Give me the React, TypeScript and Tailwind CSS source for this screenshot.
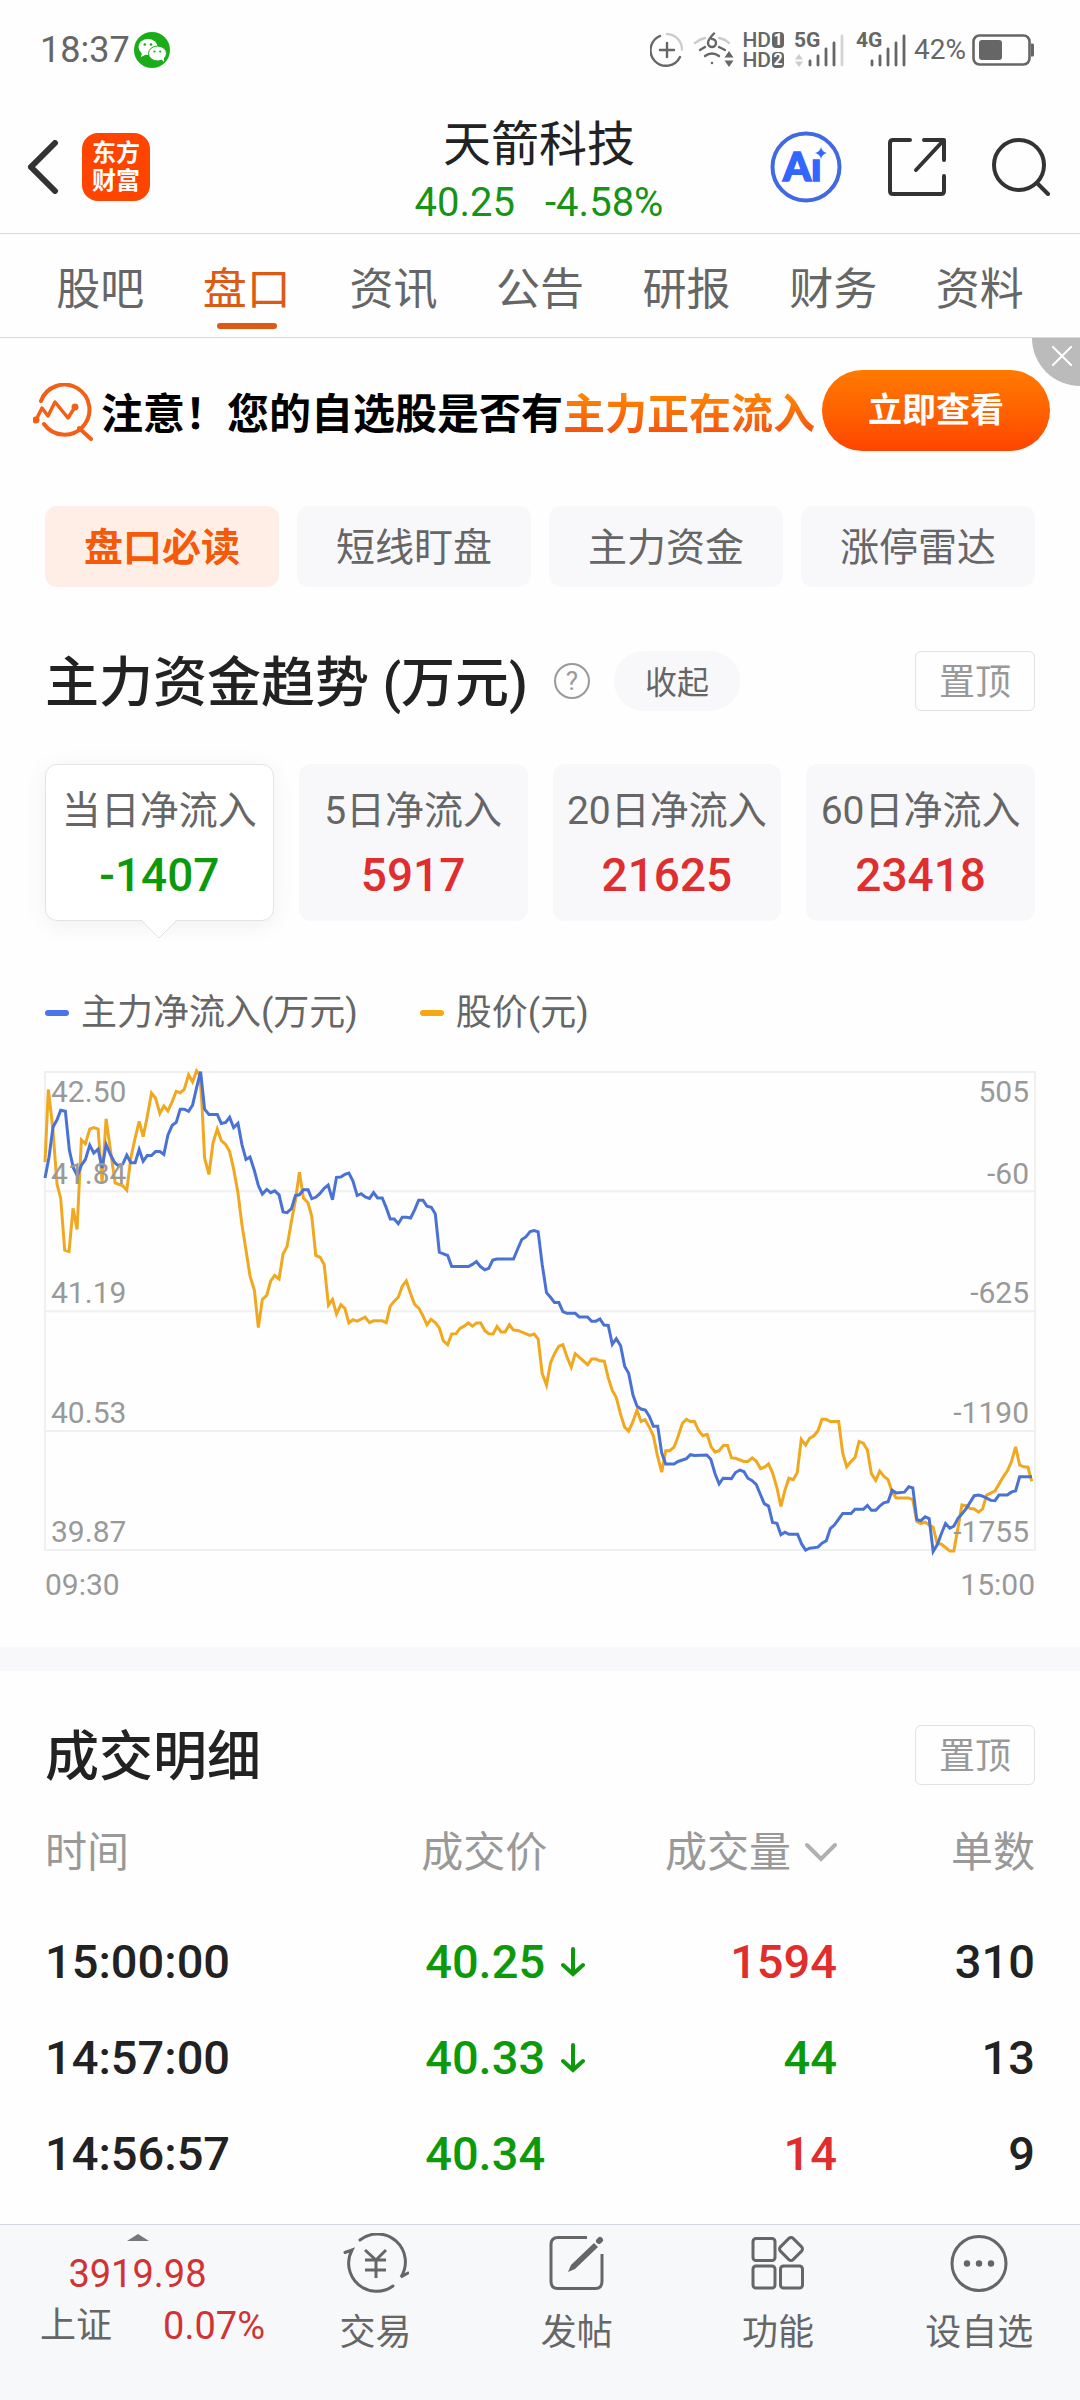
import { ReactNode } from "react";
import clsx from "clsx";

const tabs = ["股吧", "盘口", "资讯", "公告", "研报", "财务", "资料"];

const chips = ["盘口必读", "短线盯盘", "主力资金", "涨停雷达"];

const flows = [
  { label: "当日净流入", value: "-1407" },
  { label: "5日净流入", value: "5917" },
  { label: "20日净流入", value: "21625" },
  { label: "60日净流入", value: "23418" },
];

const priceTicks = ["42.50", "41.84", "41.19", "40.53", "39.87"];
const flowTicks = ["505", "-60", "-625", "-1190", "-1755"];

const trades = [
  { time: "15:00:00", price: "40.25", down: true, volume: "1594", up: true, count: "310" },
  { time: "14:57:00", price: "40.33", down: true, volume: "44", up: false, count: "13" },
  { time: "14:56:57", price: "40.34", down: false, volume: "14", up: true, count: "9" },
];

const flowLine =
  "47,358 59,300 71,215 83,195 94,168 108,171 120,280 132,330 144,352 156,322 168,306 181,266 193,288 206,277 218,330 230,264 243,293 256,315 266,323 280,319 292,294 304,315 317,315 329,278 341,311 353,295 366,295 378,284 391,284 403,292 415,238 428,210 440,202 452,165 464,165 477,171 489,154 501,105 513,60 525,165 538,180 563,180 575,205 588,202 600,188 612,217 625,205 637,265 649,306 661,299 674,337 686,379 698,403 711,390 723,399 735,394 748,405 760,453 772,455 785,444 797,407 809,405 821,391 835,391 846,416 858,412 870,402 883,387 895,378 908,419 920,356 933,355 945,348 957,344 969,366 982,407 994,402 1006,411 1019,415 1031,399 1043,414 1057,414 1069,441 1081,473 1093,473 1105,486 1117,468 1130,468 1142,470 1154,447 1166,420 1179,420 1191,437 1204,440 1216,459 1228,566 1253,575 1265,606 1315,606 1327,600 1339,592 1351,606 1364,615 1376,611 1388,588 1400,585 1450,585 1463,556 1475,530 1487,523 1500,508 1512,505 1524,509 1536,600 1549,679 1561,692 1573,707 1586,707 1598,732 1610,737 1635,737 1647,747 1672,747 1684,759 1697,759 1709,753 1721,770 1734,771 1746,824 1758,808 1771,828 1783,885 1795,905 1808,966 1820,997 1832,1005 1845,1008 1857,1026 1869,1053 1882,1053 1894,1128 1906,1159 1931,1159 1943,1152 1968,1144 1980,1133 1992,1135 2029,1134 2041,1146 2054,1187 2066,1215 2078,1199 2103,1200 2115,1183 2128,1176 2140,1180 2152,1199 2164,1205 2177,1216 2189,1243 2201,1270 2214,1277 2226,1323 2239,1325 2251,1357 2263,1350 2275,1356 2301,1356 2313,1383 2325,1400 2337,1395 2362,1392 2374,1381 2387,1374 2399,1340 2411,1330 2436,1298 2461,1298 2473,1286 2498,1286 2510,1275 2522,1289 2535,1289 2547,1277 2559,1268 2572,1265 2584,1233 2596,1240 2621,1238 2634,1223 2646,1226 2658,1315 2670,1318 2683,1307 2695,1312 2707,1404 2720,1384 2732,1353 2744,1326 2757,1339 2769,1333 2781,1312 2794,1298 2806,1284 2830,1248 2843,1246 2855,1249 2880,1261 2892,1262 2904,1246 2929,1246 2941,1238 2954,1234 2966,1195 3003,1195";

const priceLine =
  "47,313 57,110 70,215 83,375 94,415 106,560 119,564 131,443 143,502 156,251 168,262 181,221 193,217 206,221 218,370 230,192 243,280 257,372 280,380 292,392 304,302 316,250 329,199 341,242 353,187 366,120 378,134 391,177 403,156 415,170 427,146 440,115 452,119 464,110 477,69 489,89 501,58 511,70 517,150 525,302 538,348 550,260 563,221 575,253 588,264 600,284 612,333 625,400 637,490 649,560 661,632 674,672 686,777 698,698 711,687 723,646 735,631 748,641 760,571 772,550 785,480 797,420 809,342 821,414 835,428 846,466 858,575 871,580 883,600 896,714 908,698 920,739 933,713 945,723 957,764 969,755 982,759 1006,748 1019,763 1031,758 1057,758 1069,763 1081,717 1093,703 1105,692 1117,661 1129,646 1142,682 1154,712 1167,723 1179,744 1191,769 1203,754 1216,763 1228,778 1240,814 1253,825 1265,795 1278,794 1290,779 1302,773 1315,764 1327,773 1339,764 1352,764 1364,785 1376,794 1389,795 1401,774 1413,789 1425,789 1438,769 1450,784 1463,785 1499,799 1512,795 1524,809 1536,905 1549,938 1561,876 1573,850 1586,829 1598,825 1610,858 1623,888 1635,850 1672,881 1684,865 1697,865 1709,870 1722,871 1734,918 1746,953 1758,973 1771,1020 1783,1056 1795,1067 1808,1040 1820,1008 1832,1040 1844,1035 1857,1056 1869,1080 1881,1135 1894,1182 1906,1122 1918,1122 1931,1112 1943,1082 1956,1045 1968,1034 1980,1040 1992,1040 2005,1066 2017,1080 2030,1076 2042,1111 2054,1126 2066,1122 2079,1107 2091,1107 2103,1142 2115,1143 2140,1152 2152,1152 2165,1142 2177,1151 2190,1172 2202,1168 2214,1159 2226,1184 2239,1225 2251,1278 2263,1233 2275,1199 2288,1203 2300,1183 2312,1090 2325,1106 2337,1087 2350,1080 2362,1066 2374,1034 2386,1034 2399,1040 2424,1040 2436,1128 2448,1167 2460,1153 2473,1141 2485,1096 2498,1101 2510,1120 2522,1186 2535,1205 2547,1179 2559,1193 2572,1203 2584,1237 2596,1254 2633,1254 2646,1259 2658,1320 2670,1326 2683,1322 2695,1330 2707,1336 2719,1382 2732,1384 2744,1393 2757,1403 2769,1403 2781,1340 2793,1274 2806,1276 2818,1284 2830,1285 2843,1294 2855,1285 2867,1246 2892,1235 2917,1195 2929,1179 2941,1154 2954,1111 2966,1162 2978,1167 2991,1168 3002,1208";

const HdBadge = ({ sim }: { sim: string }) => (
  <div className="flex items-center gap-px">
    <span>HD</span>
    <span className="flex h-4 w-3 items-center justify-center rounded-sm bg-[#666] text-base font-bold text-white">{sim}</span>
  </div>
);

const StatusBar = () => (
  <div className="flex h-[100px] items-center justify-between pl-10 pr-[46px] text-[#666]">
    <div className="flex items-center gap-1">
      <span className="text-4xl">18:37</span>
      <svg className="size-9" viewBox="0 0 36 36">
        <circle cx="18" cy="18" r="18" fill="#1aad19" />
        <ellipse cx="14" cy="15" rx="9.5" ry="8" fill="#fff" />
        <path d="M8 20l-1 5 6-3z" fill="#fff" />
        <ellipse cx="23.5" cy="21.5" rx="9" ry="7.5" fill="#fff" stroke="#1aad19" />
        <path d="M27 27l3 3v-5z" fill="#fff" />
        <g fill="#1aad19">
          <circle cx="10.8" cy="12.5" r="1.3" />
          <circle cx="17" cy="12.5" r="1.3" />
          <circle cx="20.5" cy="19.5" r="1.1" />
          <circle cx="26.2" cy="19.5" r="1.1" />
        </g>
      </svg>
    </div>
    <div className="flex items-center">
      <svg className="h-9 w-[34px]" viewBox="0 0 34 36" fill="none" stroke="#666" strokeWidth="2.4" strokeLinecap="round">
        <path d="M17 2a15.500 15.500 0 0 1 15 15.500" stroke="#ccc" />
        <path d="M10 4a15.500 15.500 0 1 0 20 21" />
        <path d="M17 11v14M10 18h14" />
      </svg>
      <svg className="ml-2 h-9 w-[42px]" viewBox="0 0 42 36" fill="none" stroke="#666" strokeWidth="2.4" strokeLinecap="round">
        <path d="M3 11q5-4 10-5M27 6q6 1 10 5" stroke="#ccc" />
        <path d="M8 18l5-3M27 15l6 3M13 24q7-5 14 0" />
        <path d="M22 1.500q-6 6-6 9.500a4 4 0 1 0 4-4" />
        <circle cx="20" cy="31" r="1.200" fill="#666" stroke="none" />
        <path d="M37 19l4.500 6.500h-9zM37 35l4.500-6.500h-9z" fill="#666" stroke="none" />
      </svg>
      <div className="ml-2 flex flex-col gap-1 text-[21px] leading-4 font-medium">
        <HdBadge sim="1" />
        <HdBadge sim="2" />
      </div>
      <div className="ml-[10px] grid">
        <span className="col-start-1 row-start-1 text-[21px] leading-4 font-bold">5G</span>
        <svg className="col-start-1 row-start-1 h-9 w-[50px]" viewBox="0 0 50 36" stroke="#666" strokeWidth="2.800" strokeLinecap="round">
          <path d="M5 22l4 5.500H1zM5 35l4-5.500H1z" fill="#ccc" stroke="none" />
          <path d="M16 29v4M24 24v9M32 17v16M40 11v22" />
          <path d="M48 4v29" stroke="#d5d5d5" />
        </svg>
      </div>
      <div className="ml-3 grid">
        <span className="col-start-1 row-start-1 text-[21px] leading-4 font-bold">4G</span>
        <svg className="col-start-1 row-start-1 h-9 w-[50px]" viewBox="0 0 50 36" stroke="#666" strokeWidth="2.800" strokeLinecap="round">
          <path d="M16 29v4M24 24v9M32 17v16M40 11v22M48 4v29" />
        </svg>
      </div>
      <span className="ml-2 text-[28px]">42%</span>
      <svg className="ml-[6px] h-8 w-[62px]" viewBox="0 0 62 32" fill="none">
        <rect x="1.500" y="1.500" width="56" height="29" rx="6" stroke="#666" strokeWidth="2.600" />
        <rect x="7" y="6" width="23" height="20" rx="3" fill="#666" />
        <path d="M59 9.500h1.500q1.500 0 1.500 1.500v10q0 1.500-1.500 1.500H59z" fill="#666" />
      </svg>
    </div>
  </div>
);

const Header = () => (
  <header className="grid h-[134px] grid-cols-[1fr_auto_1fr] items-center border-b border-[#d9d9d9] pr-[30px] pl-7">
    <div className="flex items-center gap-[22px]">
      <button aria-label="返回">
        <svg className="h-[54px] w-8" viewBox="0 0 32 54" fill="none" stroke="#333" strokeWidth="6" strokeLinecap="round">
          <path d="M27 3L3 27l24 24" />
        </svg>
      </button>
      <a href="#" className="flex size-[68px] flex-col items-center justify-center rounded-2xl bg-[#ff4400] text-2xl leading-7 font-bold text-white">
        <span>东方</span>
        <span>财富</span>
      </a>
    </div>
    <div className="pt-3 text-center">
      <h1 className="text-5xl leading-[60px] text-[#222]">天箭科技</h1>
      <p className="flex justify-center gap-[30px] text-[40px] leading-[56px] text-[#169416]">
        <span>40.25</span>
        <span>-4.58%</span>
      </p>
    </div>
    <div className="flex items-center justify-end gap-[46px]">
      <button aria-label="AI助手">
        <svg className="size-[72px]" viewBox="0 0 72 72">
          <circle cx="36" cy="36" r="33.500" fill="none" stroke="#4169e1" strokeWidth="4" />
          <text x="13" y="50" fill="#3366ff" stroke="#3366ff" strokeWidth="1.500" className="font-[Lato] text-[40px] font-black">Aı</text>
          <path d="M51 16q1 5 6 6q-5 1-6 6q-1-5-6-6q5-1 6-6z" fill="#3366ff" />
        </svg>
      </button>
      <button aria-label="分享">
        <svg className="size-[58px]" viewBox="0 0 58 58" fill="none" stroke="#333" strokeWidth="4" strokeLinecap="round" strokeLinejoin="round">
          <path d="M22 2H5Q2 2 2 5v48q0 3 3 3h48q3 0 3-3V38M36 2h20v20M55 3L28 32" />
        </svg>
      </button>
      <button aria-label="搜索">
        <svg className="size-[58px]" viewBox="0 0 58 58" fill="none" stroke="#333" strokeWidth="4" strokeLinecap="round">
          <circle cx="27" cy="27" r="25" />
          <path d="M45 45l11 11" />
        </svg>
      </button>
    </div>
  </header>
);

const Tabs = () => (
  <nav className="flex h-[104px] border-b border-[#d9d9d9] px-[27px]">
    {tabs.map((tab) => {
      const active = tab === "盘口";
      return (
        <a key={tab} href="#" className={clsx("flex flex-1 flex-col items-center justify-between pt-[26px] pb-2 text-[44px] leading-[60px]", active ? "text-[#dc5a14]" : "text-[#666]")}>
          {tab}
          {active && <span className="h-[6px] w-[60px] rounded-full bg-[#dc5a14]" />}
        </a>
      );
    })}
  </nav>
);

const Banner = () => (
  <div className="relative flex h-[148px] items-center justify-between pr-[30px] pl-[33px]">
    <div className="flex items-center gap-2">
      <svg className="h-[58px] w-[60px]" viewBox="0 0 60 58" fill="none" stroke="#f26018" strokeWidth="4" strokeLinecap="round" strokeLinejoin="round">
        <path d="M8 18A25 25 0 1 1 11 41M46 45l12 11" />
        <path d="M3 37L9 25l6 8 7-14 13 16 7-11" strokeWidth="3.500" />
        <circle cx="3" cy="37" r="1.500" />
        <circle cx="42" cy="24" r="1.500" />
      </svg>
      <p className="pt-1 text-[42px] font-bold whitespace-nowrap text-black">
        注意！您的自选股是否有
        <span className="bg-linear-to-b from-[#ff8a00] to-[#f04a10] bg-clip-text text-transparent">主力正在流入</span>
      </p>
    </div>
    <button className="mb-1 h-[81px] w-[228px] shrink-0 rounded-full bg-linear-to-b from-[#ff7a00] to-[#ff4400] text-[34px] font-bold text-white">
      立即查看
    </button>
    <button aria-label="关闭" className="absolute top-0 right-0 flex h-12 w-12 items-center justify-center rounded-bl-full bg-[#bbb] pb-3 pl-3">
      <svg className="size-5" viewBox="0 0 20 20" stroke="#fff" strokeWidth="2">
        <path d="M0 0l20 20M20 0L0 20" />
      </svg>
    </button>
  </div>
);

const PinButton = () => (
  <button className="h-[60px] w-[120px] rounded-md border border-[#e2e2e2] pt-1 text-4xl text-[#999]">置顶</button>
);

const FlowCards = () => (
  <div className="mt-[53px] grid grid-cols-4 gap-[25px]">
    {flows.map((flow, i) => (
      <button
        key={flow.label}
        className={clsx(
          "relative h-[157px] rounded-xl text-center",
          i === 0 ? "border border-[#e4e4e4] bg-white shadow-[0_4px_24px_rgba(0,0,0,0.06)]" : "bg-[#f8f8fb]",
        )}
      >
        <span className="block text-[39px] leading-[64px] whitespace-nowrap text-[#666]">{flow.label}</span>
        <span className={clsx("block text-[46px] leading-[64px] font-medium", i === 0 ? "text-[#0c9a0c]" : "text-[#e02d2d]")}>{flow.value}</span>
        {i === 0 && (
          <svg className="absolute top-full left-1/2 h-5 w-9 -translate-x-1/2" viewBox="0 0 36 20">
            <path d="M0-1h36L18 18z" fill="#fff" />
            <path d="M0 0l18 18L36 0" fill="none" stroke="#e4e4e4" />
          </svg>
        )}
      </button>
    ))}
  </div>
);

const Ticks = ({ values, right }: { values: string[]; right?: boolean }) => (
  <div className={clsx("absolute inset-0 grid grid-rows-4 px-[6px] text-[30px] leading-9 text-[#999]", right && "text-right")}>
    <div className="flex flex-col justify-between pt-[2px]">
      <span>{values[0]}</span>
      <span>{values[1]}</span>
    </div>
    {values.slice(2).map((value) => (
      <div key={value} className="flex flex-col justify-end">
        {value}
      </div>
    ))}
  </div>
);

const TrendChart = () => (
  <>
    <div className="mt-[72px] flex h-10 items-center text-4xl text-[#666]">
      <span className="mr-3 h-[6px] w-6 rounded-sm bg-[#4a74e8]" />
      主力净流入(万元)
      <span className="mr-3 ml-[62px] h-[6px] w-6 rounded-sm bg-[#f8a813]" />
      股价(元)
    </div>
    <div className="relative mt-[39px] h-[478px]">
      <svg className="block h-full w-full overflow-visible" viewBox="47 61 2965 1339" preserveAspectRatio="none" fill="none">
        <path d="M47 61H3012V1400H47ZM47 395H3012M47 731H3012M47 1067H3012" stroke="#f0f0f0" strokeWidth="2" vectorEffect="non-scaling-stroke" />
        <polyline points={priceLine} stroke="#f0a820" strokeWidth="3" vectorEffect="non-scaling-stroke" />
        <polyline points={flowLine} stroke="#4a72d4" strokeWidth="3" vectorEffect="non-scaling-stroke" />
      </svg>
      <Ticks values={priceTicks} />
      <Ticks values={flowTicks} right />
    </div>
    <div className="mt-3 flex h-11 items-center justify-between text-[30px] text-[#999]">
      <span>09:30</span>
      <span>15:00</span>
    </div>
  </>
);

const TradeTable = () => (
  <table className="mt-[5px] w-full table-fixed">
    <thead>
      <tr className="h-[124px] text-[42px] text-[#999]">
        <th className="w-[38%] text-left font-normal">时间</th>
        <th className="w-[20%] text-left font-normal">成交价</th>
        <th className="w-[22%] font-normal">
          <button className="ml-auto flex items-center gap-[14px]">
            成交量
            <svg className="h-5 w-8" viewBox="0 0 32 20" fill="none" stroke="#b0b0b0" strokeWidth="4" strokeLinecap="round">
              <path d="M2 3l14 14L30 3" />
            </svg>
          </button>
        </th>
        <th className="w-[20%] text-right font-normal">单数</th>
      </tr>
    </thead>
    <tbody>
      {trades.map((trade) => (
        <tr key={trade.time} className="h-24 text-[47px] font-medium text-[#222]">
          <td>{trade.time}</td>
          <td className="pl-1 text-[#0c9a0c]">
            <div className="flex items-center gap-4">
              {trade.price}
              {trade.down && (
                <svg className="h-[30px] w-6" viewBox="0 0 24 30" fill="none" stroke="currentColor" strokeWidth="4" strokeLinecap="round">
                  <path d="M12 2v25M2 18l10 9 10-9" />
                </svg>
              )}
            </div>
          </td>
          <td className={clsx("text-right", trade.up ? "text-[#e02d2d]" : "text-[#0c9a0c]")}>{trade.volume}</td>
          <td className="text-right">{trade.count}</td>
        </tr>
      ))}
    </tbody>
  </table>
);

const FooterItem = ({ label, children }: { label: string; children: ReactNode }) => (
  <button className="flex flex-1 flex-col items-center pt-2 text-4xl leading-[52px]">
    <svg className="mb-[14px] h-[60px] w-[66px]" viewBox="0 0 66 60" fill="none" stroke="#666" strokeWidth="3" strokeLinecap="round">
      {children}
    </svg>
    {label}
  </button>
);

const Footer = () => (
  <footer className="mt-auto flex h-44 border-t border-[#d3d6e0] bg-[#f7f8fa] text-[#666]">
    <a href="#" className="flex w-[275px] shrink-0 flex-col items-center pt-[9px]">
      <svg className="h-[7px] w-[22px]" viewBox="0 0 22 7">
        <path d="M0 7L11 0l11 7z" fill="#777" />
      </svg>
      <span className="mt-[6px] text-[38px] leading-[54px] text-[#d03333]">3919.98</span>
      <span className="flex w-full justify-between pr-[10px] pl-10 text-4xl leading-[50px]">
        上证
        <span className="text-[38px] text-[#d03333]">0.07%</span>
      </span>
    </a>
    <FooterItem label="交易">
      <path d="M17 7A28 28 0 0 1 58 44l0 0 7-4M50 53A28 28 0 0 1 9 17L2 19.500" />
      <path d="M22 17l11 10 10-10M22 27h21M22 37h21M33 27v18" strokeLinecap="butt" />
    </FooterItem>
    <FooterItem label="发帖">
      <path d="M43 4.500H14q-7 0-7 7v37q0 7 7 7h37q7 0 7-7V21" strokeLinecap="butt" />
      <path d="M24 39l3-7 23-22 4 4-23 22z" fill="#666" stroke="none" />
      <path d="M55 8l1-1" strokeWidth="6" />
    </FooterItem>
    <FooterItem label="功能">
      <rect x="8" y="5.500" width="22" height="22" rx="3" />
      <rect x="8" y="33" width="22" height="22" rx="3" />
      <rect x="35.500" y="33" width="22" height="22" rx="3" />
      <rect x="37" y="7" width="18" height="18" rx="3" transform="rotate(45 46 16)" />
    </FooterItem>
    <FooterItem label="设自选">
      <circle cx="33" cy="30.500" r="27" />
      <g fill="#666" stroke="none">
        <circle cx="21" cy="30.500" r="3.200" />
        <circle cx="33" cy="30.500" r="3.200" />
        <circle cx="45" cy="30.500" r="3.200" />
      </g>
    </FooterItem>
  </footer>
);

export default function App() {
  return (
    <div className="flex min-h-screen flex-col bg-[#fefefe] font-[Roboto,'Noto_Sans_CJK_SC',sans-serif]">
      <StatusBar />
      <Header />
      <Tabs />
      <Banner />
      <section className="px-[45px] pt-5">
        <div className="grid grid-cols-4 gap-[18px]">
          {chips.map((chip, i) => (
            <button key={chip} className={clsx("h-[81px] rounded-xl pt-1 text-[39px]", i === 0 ? "bg-[#ffeee6] font-bold text-[#f5590a]" : "bg-[#f8f8fb] text-[#666]")}>
              {chip}
            </button>
          ))}
        </div>
        <div className="mt-16 flex h-[60px] items-center">
          <h2 className="pt-1 text-[54px] font-medium text-[#222]">主力资金趋势 (万元)</h2>
          <button aria-label="说明" className="ml-[26px] flex size-9 items-center justify-center rounded-full border-2 border-[#999] text-[26px] text-[#999]">
            ?
          </button>
          <button className="mr-auto ml-6 h-[60px] w-[126px] rounded-full bg-[#f8f8fb] pt-1 text-[32px] text-[#666]">收起</button>
          <PinButton />
        </div>
        <FlowCards />
        <TrendChart />
      </section>
      <div className="mt-[41px] h-6 bg-[#f8f8fb]" />
      <section className="px-[45px] pt-[54px]">
        <div className="flex h-[60px] items-center justify-between">
          <h2 className="pt-1 text-[54px] font-medium text-[#222]">成交明细</h2>
          <PinButton />
        </div>
        <TradeTable />
      </section>
      <Footer />
    </div>
  );
}
